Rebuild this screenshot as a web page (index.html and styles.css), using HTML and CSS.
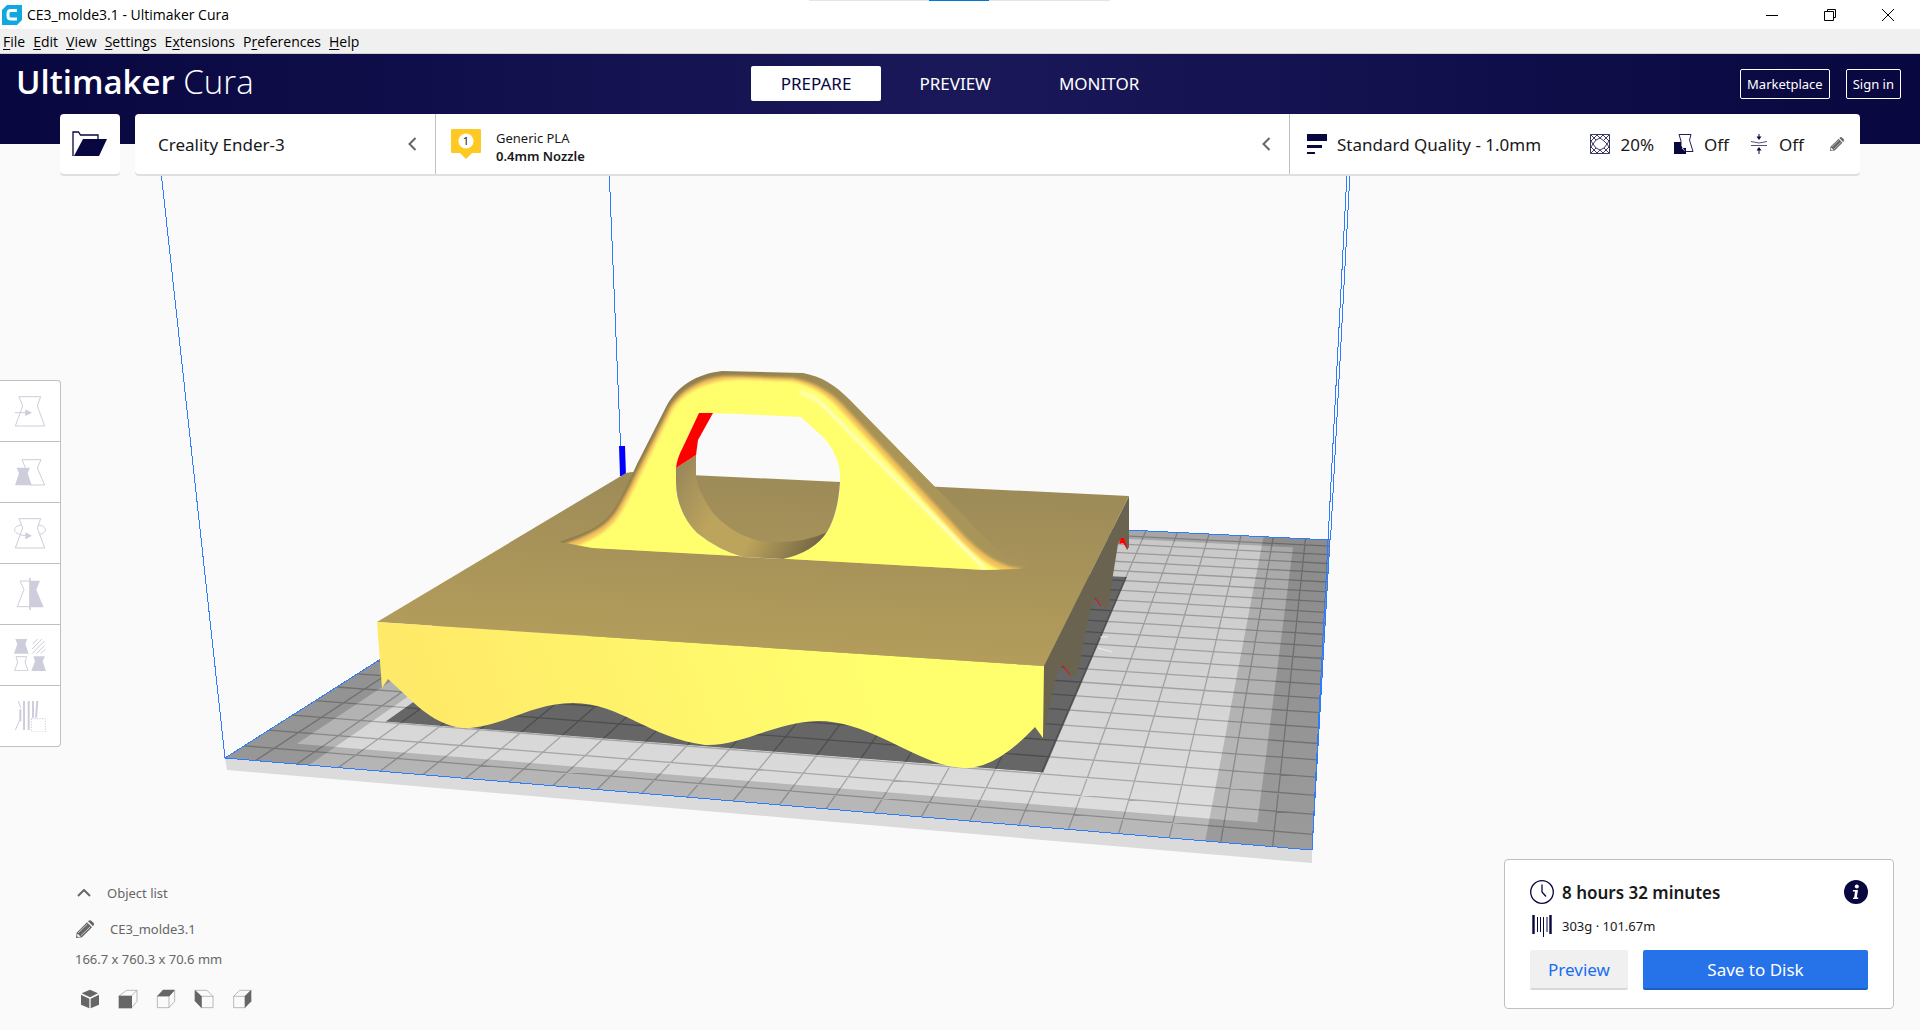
FILE: index.html
```html
<!DOCTYPE html>
<html lang="en">
<head>
<meta charset="utf-8">
<meta name="viewport" content="width=device-width, initial-scale=1">
<title>CE3_molde3.1 - Ultimaker Cura</title>
<link rel="stylesheet" href="styles.css">
</head>
<body>
<div class="app">
  <div class="titlebar">
    <svg class="app-icon" viewBox="0 0 20 20" aria-hidden="true"><path fill="#0fa8e0" d="M5 0H20V15L15 20H0V5z"/><path d="M15 5.600H9Q6 5.600 6 8.500V11Q6 14 9 14H15" fill="none" stroke="#fff" stroke-width="3"/></svg>
    <span class="window-title">CE3_molde3.1 - Ultimaker Cura</span>
    <span class="drag-strip" aria-hidden="true"></span>
    <div class="window-buttons">
      <button type="button" aria-label="Minimize"><svg viewBox="0 0 14 14"><path d="M1 7.500H13" /></svg></button>
      <button type="button" aria-label="Restore"><svg viewBox="0 0 14 14"><path d="M1.500 3.500H10.500V12.500H1.500zM4.500 3.500V1.500H12.500V9.500H10.500"/></svg></button>
      <button type="button" aria-label="Close"><svg viewBox="0 0 14 14"><path d="M1 1L13 13M13 1L1 13"/></svg></button>
    </div>
  </div>
  <nav class="menubar" aria-label="Menu">
    <button type="button"><u>F</u>ile</button>
    <button type="button"><u>E</u>dit</button>
    <button type="button"><u>V</u>iew</button>
    <button type="button"><u>S</u>ettings</button>
    <button type="button">E<u>x</u>tensions</button>
    <button type="button">P<u>r</u>eferences</button>
    <button type="button"><u>H</u>elp</button>
  </nav>
  <header class="header">
    <div class="logo"><b>Ultimaker</b> <span>Cura</span></div>
    <nav class="tabs" aria-label="Stages">
      <button type="button" class="tab active">PREPARE</button>
      <button type="button" class="tab">PREVIEW</button>
      <button type="button" class="tab">MONITOR</button>
    </nav>
    <div class="account">
      <button type="button">Marketplace</button>
      <button type="button">Sign in</button>
    </div>
  </header>

  <main class="stage">
    <svg class="scene" viewBox="0 144 1920 886" preserveAspectRatio="xMidYMid slice" role="img" aria-label="Model on build plate">
      <defs>
        <linearGradient id="plate" x1="0" y1="0" x2="0" y2="1"><stop offset="0" stop-color="#c6c6c6"/><stop offset="1" stop-color="#e0e0e0"/></linearGradient>
        <linearGradient id="top" gradientUnits="userSpaceOnUse" x1="700" y1="475" x2="690" y2="660"><stop offset="0" stop-color="#9d8b58"/><stop offset="1" stop-color="#b59e5b"/></linearGradient>
        <linearGradient id="front" gradientUnits="userSpaceOnUse" x1="420" y1="740" x2="860" y2="600"><stop offset="0" stop-color="#ffe968"/><stop offset="1" stop-color="#ffff6e"/></linearGradient>
        <linearGradient id="bore" gradientUnits="userSpaceOnUse" x1="676" y1="460" x2="827" y2="535"><stop offset="0" stop-color="#97855a"/><stop offset=".35" stop-color="#bda45c"/><stop offset=".6" stop-color="#bda45c"/><stop offset="1" stop-color="#6f6344"/></linearGradient>
        <linearGradient id="rim" gradientUnits="userSpaceOnUse" x1="600" y1="0" x2="1000" y2="0"><stop offset="0" stop-color="#8d7a4c"/><stop offset=".4" stop-color="#93814f"/><stop offset=".75" stop-color="#ab9657"/><stop offset="1" stop-color="#a8945a"/></linearGradient>
        <filter id="soft" x="-10%" y="-10%" width="120%" height="120%"><feGaussianBlur stdDeviation="1.400"/></filter>
        <clipPath id="face-clip"><path d="M559 542C590 532 604 525 615 508C622 497 630 479 637 464L667 405C678 386 696 374 722 371L803 373C823 377 835 385 850 400L990 543C1003 555 1013 559 1033 561L1021 569L985 570L593 548z"/></clipPath>
      </defs>
      <path d="M225 758L227 770L1312 863L1312 850z" fill="#dbdbdb"/>
      <path d="M225 758L1312 850L1330 540L623 505z" fill="url(#plate)"/>
      <path id="bed-margin" fill="#000" fill-opacity=".17" fill-rule="evenodd"/>
      <path id="bed-sides" fill="#000" fill-opacity=".16"/>
      <path d="M385 722L1043 773L1127 577L980 570L480 655z" fill="#666"/>
      <path d="M385 722L1043 773" stroke="#e4e4e4" fill="none"/>
      <path d="M1098 648l14 4M1100 637h8" stroke="#eee" fill="none"/>
      <path id="bed-grid" stroke="#000" stroke-opacity=".24" stroke-width="1.300" fill="none"/>
      <g stroke="#2d7dfb" stroke-width="1" fill="none" shape-rendering="crispEdges">
        <path d="M623 505L225 758L1312 850L1330 540z"/>
        <path d="M158 144L225 758M608 144L623 505M1348.500 144L1312 850M1351.500 144L1330.500 540"/>
      </g>
      <path d="M619 446h6l1 30h-6z" fill="#00f"/>

      <path d="M1044 666L1129 496V547L1127 550L1122 538L1118 544L1113 575L1109 603Q1107 612 1102 605L1095 598L1090 610L1079 667Q1075 682 1070 674L1063 665L1057 673L1050 703L1043 738z" fill="#6a6350"/>
      <path d="M1119 544l2-6h3l4 12-5-7z" fill="red"/>
      <path d="M1095 598l6 8M1062 665l8 10" fill="none" stroke="red"/>
      <path d="M377 622L626 473L632 472L1129 496L1044 666z" fill="url(#top)"/>
      <path d="M377 622L1044 666L1043 738L1035 727Q990 775 955 767C915 762 870 721 818 721C775 722 742 746 705 745C650 738 620 703 573 703C530 703 500 729 462 728C430 724 410 698 388 679L382 688z" fill="url(#front)"/>

      <g clip-path="url(#face-clip)">
        <path d="M540 350H1050V580H540z" fill="url(#rim)"/>
        <path d="M559 546C590 535 606 527 617 510C626 495 634 478 640 466L670 407C681 391 698 379 724 376L740 376L793 378C813 382 828 390 842 404L966 538C984 555 1000 567 1024 569L985 575L560 552z" fill="#f5c25c" filter="url(#soft)"/>
        <path d="M570 549C596 538 610 530 621 512C630 497 638 479 644 467L672 410C682 394 700 384 725 380L740 379L792 381C811 385 826 394 839 408L963 543C975 554 987 565 1003 571L985 575L580 552z" fill="#ffff6e" filter="url(#soft)"/>
        <path d="M800 392Q815 396 826 408L985 569" stroke="#ffffc8" stroke-width="3" fill="none" filter="url(#soft)"/>
        <path d="M820 403L907 490L985 569" stroke="#ffffd0" stroke-width="1" fill="none"/>
      </g>
      <path id="hole" d="M699 413L740 414L801 417L823 437Q842 457 840 485Q838 514 827 532Q814 550 783 559L743 557Q718 550 697 533C683 519 676 500 676 483V468Q677 458 683 447z" fill="#fafafa"/>
      <path d="M690 475L840 482Q838 514 827 532L800 545L745 548L706 525L690 495z" fill="url(#top)"/>
      <path d="M676 468L696 455V475Q697 490 713 513C732 534 755 542 773 542Q805 543 827 532Q814 552 783 559L743 557Q718 550 697 533C683 519 676 500 676 483z" fill="url(#bore)"/>
      <path d="M699 413H713L698 440L696 455L676 468Q677 458 683 447z" fill="red"/>
    </svg>

    <div class="overlay">
      <div class="cards">
        <button type="button" class="card open-file" aria-label="Open file">
          <svg viewBox="0 0 36 26"><path d="M1 25V1H6.500L8.500 4H26V8" fill="none" stroke="#08073f" stroke-width="1.300"/><path d="M11 8H35L27 25H2z" fill="#08073f"/></svg>
        </button>
        <div class="card setup">
          <button type="button" class="printer"><span>Creality Ender-3</span>
            <svg class="chevron" viewBox="0 0 9 14"><path d="M7.500 1L1.500 7L7.500 13"/></svg></button>
          <button type="button" class="material">
            <svg class="extruder" viewBox="0 0 30 30"><path d="M1 0H29Q30 0 30 1V23Q30 24 29 24H21L15 30L9 24H1Q0 24 0 23V1Q0 0 1 0z" fill="#ffc924"/><circle cx="15" cy="12" r="7.600" fill="#fff"/><text x="15" y="16" text-anchor="middle">1</text></svg>
            <span class="material-text">Generic PLA<b>0.4mm Nozzle</b></span>
            <svg class="chevron" viewBox="0 0 9 14"><path d="M7.500 1L1.500 7L7.500 13"/></svg></button>
          <button type="button" class="profile">
            <svg class="ic" viewBox="0 0 20 20" fill="#08073f"><path d="M0 0h20v7H0zM0 11h15v3H0zM0 18h8v2H0z"/></svg>
            <span class="quality">Standard Quality - 1.0mm</span>
            <svg class="ic" viewBox="0 0 20 20" fill="none" stroke="#08073f"><path d="M.5.500h19v19H.5z" stroke-opacity=".8"/><path d="M1 1L6 6M19 1L14 6M1 19L6 14M19 19L14 14M7 1L1 7M13 1L19 7M1 13L7 19M19 13L13 19M7 1L10 4L13 1M7 19L10 16L13 19M1 7L3 10L1 13M19 7L17 10L19 13M10 4L14 7L17 10L14 14L10 16L6 14L3 10L6 6z" stroke-width=".8"/></svg>
            <span class="infill">20%</span>
            <svg class="ic" viewBox="0 0 20 20"><path d="M0 8H7V14H12V20H0z" fill="#08073f"/><path d="M5 .5H17L15.500 6L19 17.500H11L7 14V7z" fill="#fff" stroke="#08073f" stroke-width=".9"/><path d="M4 8H7V14H12V18" fill="#08073f"/></svg>
            <span class="support">Off</span>
            <svg class="ic small" viewBox="0 0 16 20" fill="#08073f"><path d="M0 7.500Q8 10.500 16 7.500M0 11.500H16" fill="none" stroke="#08073f" stroke-opacity=".7"/><path d="M8 6L5.500 2.500H7.500V0H8.500V2.500H10.500zM8 13L5.500 16.500H7.500V20H8.500V16.500H10.500z"/></svg>
            <span class="adhesion">Off</span>
            <svg class="pencil" viewBox="48 149 54 54"><use href="#pencil-shape"/></svg>
          </button>
        </div>
      </div>

      <div class="tools" role="toolbar" aria-label="Tools">
        <button type="button" aria-label="Move"><svg viewBox="42 74 96 96"><path d="M57 79H122L112 107L134 167H46L68 107z"/><path d="M45 127H78"/><path class="solid" d="M76 117L96 127L76 137z"/></svg></button>
        <button type="button" aria-label="Scale"><svg viewBox="42 257 96 96"><path d="M76 292L66 268H123L112 293L134 344H90"/><path class="solid" d="M50 292H90L83 309L95 345H45L57 309z"/></svg></button>
        <button type="button" aria-label="Rotate"><svg viewBox="42 440 96 96"><path d="M57 445H122L112 473L134 533H46L68 473z"/><path d="M66 464C36 466 34 492 76 496M114 464C142 466 144 488 119 492"/><path class="solid" d="M76 486L96 496L76 507z"/></svg></button>
        <button type="button" aria-label="Mirror"><svg viewBox="42 623 96 96"><path d="M90 632H60L72 658L52 709H90"/><path class="solid" d="M90 631H120L109 658L131 711H90z"/><path d="M90 622V719" stroke-width="5"/></svg></button>
        <button type="button" aria-label="Per model settings"><svg viewBox="42 807 96 96"><path class="solid" d="M46 807H82L76 822L86 851H42L52 822zM100 859H135L128 874L138 903H94L105 874z"/><path d="M48 860H80L75 876L84 902H44L53 876z"/><path d="M98 822L113 807M96 837L126 807M96 851L134 813M109 851L134 826M122 851L136 838"/></svg></button>
        <button type="button" aria-label="Support blocker"><svg viewBox="42 990 96 96"><path d="M61 1018V1054M72 993V1080M86 993V1080M99 993V1043M112 993L108 1043" stroke-width="6"/><path d="M55 993l7 20M46 1080l14-32"/><path d="M94 1046H136V1086H94z" stroke-dasharray="4 4"/></svg></button>
      </div>

      <div class="bottom">
        <section class="objects">
          <button type="button" class="list-toggle"><svg class="caret" viewBox="0 0 14 8"><path d="M1 7L7 1L13 7"/></svg>Object list</button>
          <div class="object-name"><svg viewBox="48 149 54 54"><g id="pencil-shape" fill="#666"><path d="M84 153Q89 147 94 151L101 158Q104 162 99 168z"/><path d="M81 156L96 171L66 201L48 203L50 187z"/><path d="M55 187L82 161M63 196L90 170" stroke="#fafafa" stroke-width="2"/><path d="M53 190L62 199L54 200L51 197z" fill="#fafafa"/></g></svg><span>CE3_molde3.1</span></div>
          <div class="dims">166.7 x 760.3 x 70.6 mm</div>
          <div class="views">
            <button type="button" aria-label="3D view"><svg viewBox="60 359 60 60"><path class="f" d="M90 361L114 372L90 384L65 372zM63 376L88 388V417L63 406zM117 376L92 388V417L117 406z"/></svg></button>
            <button type="button" aria-label="Front view"><svg viewBox="174 359 60 60"><path d="M178 379L200 363H231V396L215 415M215 379L231 363"/><path class="f" d="M176 379H216V417H176z"/></svg></button>
            <button type="button" aria-label="Top view"><svg viewBox="288 359 60 60"><path d="M292 380H327V415H292zM327 380L344 363V396L327 415"/><path class="f" d="M291 381L309 361H345L328 381z"/></svg></button>
            <button type="button" aria-label="Left view"><svg viewBox="401 359 60 60"><path d="M404 363H440L458 381V415H423V381H458M404 363L423 381"/><path class="f" d="M403 362L424 381V417L403 395z"/></svg></button>
            <button type="button" aria-label="Right view"><svg viewBox="515 359 60 60"><path d="M520 381L538 363H572L554 381H520V415H554"/><path class="f" d="M573 361V396L553 417V381z"/></svg></button>
          </div>
        </section>

        <section class="job">
          <div class="job-row">
            <svg class="i24" viewBox="0 0 24 24" fill="none" stroke="#08073f" stroke-width="1.300"><circle cx="12" cy="12" r="11.300"/><path d="M12 4.500V12L16 16.500"/></svg>
            <strong>8 hours 32 minutes</strong>
            <button type="button" class="info" aria-label="Details"><svg viewBox="0 0 24 24"><circle cx="12" cy="12" r="12" fill="#08073f"/><circle cx="12.800" cy="6.500" r="2" fill="#fff"/><path d="M9 10H14L12.800 17.500H14.500L14 19H9L9.300 17.500H10.200L11 11.500H8.800z" fill="#fff"/></svg></button>
          </div>
          <div class="job-row usage">
            <svg class="i24" viewBox="0 0 24 24" fill="none" stroke="#08073f"><path d="M3.500 1V20M20.500 1V20" stroke-width="2.400"/><path d="M7.500 3V18M10.500 3V18M13.500 3V23M17 3V18" stroke-width="1"/></svg>
            <span>303g · 101.67m</span>
          </div>
          <div class="job-actions">
            <button type="button" class="secondary">Preview</button>
            <button type="button" class="primary">Save to Disk</button>
          </div>
        </section>
      </div>
    </div>
  </main>
</div>
<script src="scene.js"></script>
</body>
</html>
```
FILE: styles.css
```css
* { box-sizing: border-box; }
body { margin: 0; font-family: "Noto Sans", "Open Sans", sans-serif; font-size: 13px; color: #191919; background: #fafafa; }
button { font: inherit; color: inherit; background: none; border: 0; padding: 0; margin: 0; }
svg { display: block; flex: none; }

.app { min-height: 100vh; display: flex; flex-direction: column; }

.titlebar { position: relative; height: 29px; display: flex; align-items: center; background: #fff; color: #000; font: 14px "Open Sans", sans-serif; padding: 0 3px 0 2px; }
.app-icon { width: 20px; height: 20px; margin-right: 5px; }
.window-title { flex: 1; }
.drag-strip { position: absolute; top: 0; left: 50%; width: 301px; height: 1px; margin-left: -151px; background: linear-gradient(90deg, #e5e5e5 120px, #0078d7 120px 180px, #e5e5e5 180px); }
.window-buttons { display: flex; }
.window-buttons button { width: 58px; height: 27px; display: grid; place-items: center; }
.window-buttons svg { width: 14px; height: 14px; fill: none; stroke: #000; }

.menubar { height: 25px; display: flex; align-items: center; gap: 8px; padding-left: 3px; background: #f0f0f0; border-bottom: 1px solid #d2d2d2; color: #000; font: 14px "Open Sans", sans-serif; }
.menubar u { text-underline-offset: 2px; }

.header { height: 90px; display: grid; grid-template-columns: 1fr auto 1fr; align-items: start; background: linear-gradient(90deg, #08073f, #1a1859 50%, #08073f); color: #fff; }
.logo { padding-left: 16px; height: 60px; font-size: 33px; line-height: 56px; font-family: "Open Sans", sans-serif; }
.logo b { font-weight: 600; }
.logo span { font-weight: 300; }
.tabs { display: flex; gap: 8px; padding-top: 12px; }
.tab { height: 35px; padding: 0 30px; border-radius: 2px; font-size: 17px; }
.tab.active { background: #fff; color: #08073f; }
.account { display: flex; justify-content: flex-end; gap: 16px; padding: 15px 19px 0 0; }
.account button { height: 30px; padding: 0 6px; border: 1px solid #fff; border-radius: 2px; }

.stage { flex: 1; display: grid; }
.scene, .overlay { grid-area: 1 / 1; }
.scene { width: 100%; height: 100%; min-height: 0; contain: size; }
.overlay { display: flex; flex-direction: column; position: relative; }

.cards { display: flex; gap: 15px; margin: -30px 60px 0; }
.card { background: #fff; border-radius: 4px; box-shadow: 0 2px 0 #dfdfdf; height: 60px; }
.open-file { width: 60px; display: grid; place-items: center; }
.open-file svg { width: 36px; height: 26px; }
.setup { flex: 1; display: flex; font-size: 17px; }
.setup > button { display: flex; align-items: center; text-align: left; }
.chevron { width: 9px; height: 14px; fill: none; stroke: #666; stroke-width: 2; margin-left: auto; }
.printer { width: 301px; padding: 0 18px 0 23px; border-right: 1px solid #c0c0c0; }
.material { flex: 1; padding: 0 18px 0 15px; border-right: 1px solid #c0c0c0; font-size: 13px; line-height: 18px; }
.extruder { width: 30px; height: 30px; margin-right: 15px; }
.extruder text { font: 11px "Noto Sans", sans-serif; fill: #191919; }
.material-text { padding-top: 5px; }
.material-text b { display: block; font-weight: 600; }
.profile { width: 570px; padding: 0 16px 0 17px; }
.ic { width: 20px; height: 20px; margin-right: 10px; }
.ic.small { width: 16px; height: 20px; margin-right: 12px; }
.quality { flex: 1; }
.infill { margin-right: 20px; }
.support { margin-right: 22px; }
.adhesion { margin-right: 26px; }
.pencil { width: 14px; height: 14px; }

.tools { align-self: flex-start; margin-top: 206px; background: #fff; border: 1px solid #c0c0c0; border-left: 0; border-radius: 0 4px 4px 0; }
.tools button { width: 60px; height: 60px; display: grid; place-items: center; }
.tools button + button { border-top: 1px solid #c0c0c0; height: 61px; }
.tools svg { width: 32px; height: 32px; fill: none; stroke: #cecddb; stroke-width: 3; }
.tools .solid { fill: #cecddb; stroke: none; }

.bottom { margin-top: auto; padding: 0 26px 21px 75px; display: flex; justify-content: space-between; align-items: flex-end; }
.objects { color: #666; display: flex; flex-direction: column; align-items: flex-start; line-height: 18px; }
.list-toggle { display: flex; align-items: center; gap: 16px; padding-left: 2px; }
.caret { width: 14px; height: 8px; fill: none; stroke: #666; stroke-width: 2; }
.object-name { display: flex; align-items: center; gap: 16px; margin-top: 18px; padding-left: 1px; }
.object-name svg { width: 18px; height: 18px; }
.dims { margin-top: 12px; }
.views { display: flex; gap: 18px; padding-left: 5px; margin-top: 21px; }
.views svg { width: 20px; height: 20px; fill: none; stroke: #999; stroke-width: 2; }
.views .f { fill: #666; stroke: none; }

.job { width: 390px; padding: 20px 25px 18px; background: #fff; border: 1px solid #c0c0c0; border-radius: 4px; }
.job-row { display: flex; align-items: center; gap: 8px; height: 24px; }
.job-row strong { flex: 1; font-size: 17px; font-weight: 600; }
.i24, .info svg { width: 24px; height: 24px; }
.usage { margin-top: 10px; }
.job-actions { display: flex; gap: 15px; margin-top: 12px; font-size: 17px; }
.job-actions button { height: 40px; border-radius: 2px; }
.secondary { width: 98px; background: #f0f0f0; color: #196ef0; border-bottom: 2px solid #d8d8d8; }
.primary { flex: 1; background: #2672e8; color: #fff; border-bottom: 2px solid #1b5fc7; }
```
FILE: scene.js
```js
// Build plate is 235 x 235 mm; corners are given in scene units.
const BED = 235;
const [p0, p1, p2, p3] = [[225, 758], [1312, 850], [1330, 540], [623, 505]];

// Projective mapping from the plate to the screen.
const sx = p0[0] - p1[0] + p2[0] - p3[0], sy = p0[1] - p1[1] + p2[1] - p3[1];
const dx1 = p1[0] - p2[0], dx2 = p3[0] - p2[0], dy1 = p1[1] - p2[1], dy2 = p3[1] - p2[1];
const det = dx1 * dy2 - dx2 * dy1;
const g = (sx * dy2 - dx2 * sy) / det, h = (dx1 * sy - sx * dy1) / det;
function project(x, y) {
  const u = x / BED, v = y / BED, w = g * u + h * v + 1;
  const px = (p1[0] - p0[0] + g * p1[0]) * u + (p3[0] - p0[0] + h * p3[0]) * v + p0[0];
  const py = (p1[1] - p0[1] + g * p1[1]) * u + (p3[1] - p0[1] + h * p3[1]) * v + p0[1];
  return (px / w).toFixed(1) + ' ' + (py / w).toFixed(1);
}
const line = (a, b, c, d) => `M${project(a, b)}L${project(c, d)}`;
const rect = (x1, y1, x2, y2) =>
  `M${project(x1, y1)}L${project(x2, y1)}L${project(x2, y2)}L${project(x1, y2)}z`;

let grid = '';
for (let mm = 7.5; mm < BED; mm += 10) {
  grid += line(mm, 0, mm, BED) + line(0, mm, BED, mm);
}
document.getElementById('bed-grid').setAttribute('d', grid);
document.getElementById('bed-margin').setAttribute('d', rect(0, 0, BED, BED) + rect(11, 11, BED - 11, BED - 11));
document.getElementById('bed-sides').setAttribute('d', rect(0, 0, 20.5, BED) + rect(BED - 20.5, 0, BED, BED));
```
